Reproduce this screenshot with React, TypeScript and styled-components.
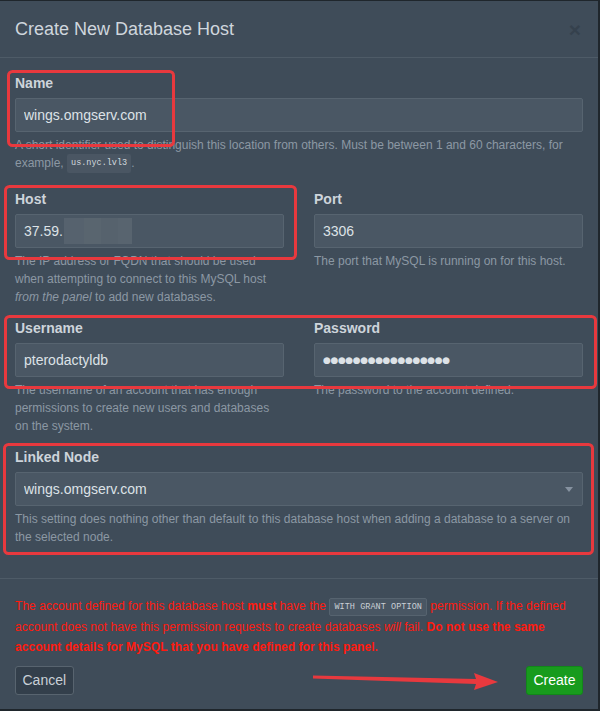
import React from 'react';
import styled, { createGlobalStyle } from 'styled-components';

const GlobalStyle = createGlobalStyle`
    html, body {
        margin: 0;
        padding: 0;
        background: #1f262c;
    }
    body {
        font-family: 'Liberation Sans', Arial, sans-serif;
        -webkit-font-smoothing: antialiased;
    }
`;

const Modal = styled.div`
    position: relative;
    width: 598px;
    height: 708px;
    margin-top: 1px;
    background: #3f4c59;
    color: #cdd4db;
    box-sizing: border-box;
`;

const Header = styled.div`
    display: flex;
    align-items: center;
    justify-content: space-between;
    padding: 15px;
    border-bottom: 1px solid #4e5b67;
`;

const Title = styled.h4`
    margin: 0;
    font-size: 18px;
    font-weight: normal;
    line-height: 26px;
    color: #cfd6dd;
`;

const Close = styled.button`
    border: 0;
    background: none;
    padding: 0;
    margin-right: 2px;
    font-family: 'Liberation Sans', Arial, sans-serif;
    font-size: 21px;
    font-weight: bold;
    line-height: 1;
    color: #35414d;
    cursor: pointer;
`;

const Body = styled.div`
    padding: 15px;
`;

const Row = styled.div`
    display: grid;
    grid-template-columns: 1fr 1fr;
    column-gap: 30px;
`;

const Group = styled.div<{ $mb?: number }>`
    margin-bottom: ${({ $mb = 14 }) => $mb}px;
`;

const Label = styled.label`
    display: block;
    margin-bottom: 5px;
    font-size: 14px;
    font-weight: bold;
    line-height: 20px;
    color: #cdd4db;
`;

const Field = styled.div`
    position: relative;
    display: flex;
    align-items: center;
    height: 34px;
    box-sizing: border-box;
    padding: 0 8px;
    background: #4a5764;
    border: 1px solid #576470;
    border-radius: 2px;
`;

const Input = styled.input<{ $masked?: boolean }>`
    flex: 1;
    min-width: 0;
    padding: 0;
    border: 0;
    outline: none;
    background: transparent;
    font-family: ${({ $masked }) => ($masked ? "'DejaVu Sans', sans-serif" : "'Liberation Sans', Arial, sans-serif")};
    font-size: ${({ $masked }) => ($masked ? '9px' : '14px')};
    letter-spacing: ${({ $masked }) => ($masked ? '-0.4px' : 'normal')};
    color: #dde2e7;
`;

const Redacted = styled.span`
    position: absolute;
    left: 48px;
    top: 3px;
    width: 68px;
    height: 26px;
    background: linear-gradient(90deg, #56626e 0 30%, #59656f 30% 55%, #56626d 55% 80%, #58646f 80%);
`;

const Caret = styled.span`
    position: absolute;
    right: 9px;
    top: 14px;
    width: 0;
    height: 0;
    border-left: 4px solid transparent;
    border-right: 4px solid transparent;
    border-top: 5px solid #8692a0;
`;

const Code = styled.code`
    display: inline-block;
    padding: 3px 4px;
    font-family: 'Liberation Mono', monospace;
    font-size: 8.5px;
    line-height: 13px;
    color: #d3d9df;
    background: #4a5663;
    border-radius: 2px;
    vertical-align: middle;
`;

const Help = styled.p`
    margin: 4px 0 0;
    font-size: 12px;
    line-height: 18px;
    color: #8c98a4;

    em {
        font-style: italic;
    }
`;

const Footer = styled.div`
    padding: 17px 15px 15px;
    border-top: 1px solid #4e5b67;
`;

const Warning = styled.p`
    margin: 0 0 8px;
    font-size: 12px;
    line-height: 20.5px;
    letter-spacing: 0.05px;
    color: #ff1a0f;

    ${Code} {
        border: 1px solid #56636f;
        padding: 2px 4px;
        line-height: 12px;
        color: #c9d0d6;
        background: #495663;
    }
`;

const Actions = styled.div`
    display: flex;
    justify-content: space-between;
    align-items: center;
`;

const Button = styled.button<{ $primary?: boolean }>`
    height: 29px;
    padding: 0 6.5px;
    font-family: 'Liberation Sans', Arial, sans-serif;
    font-size: 14px;
    border-radius: 3px;
    cursor: pointer;
    color: ${({ $primary }) => ($primary ? '#ffffff' : '#c9d0d7')};
    background: ${({ $primary }) => ($primary ? '#189b1d' : '#333f4b')};
    border: 1px solid ${({ $primary }) => ($primary ? '#12861a' : '#58646f')};
`;

const Overlay = styled.svg`
    position: absolute;
    left: 0;
    top: 0;
    pointer-events: none;
`;

const marks = [
    { x: 8.5, y: 70.5, w: 165, h: 74 },
    { x: 5.5, y: 185.5, w: 290, h: 72 },
    { x: 5.5, y: 315.5, w: 590, h: 71 },
    { x: 4.5, y: 443.5, w: 588, h: 109 },
];

export default function App() {
    return (
        <>
            <GlobalStyle />
            <Modal>
                <Header>
                    <Title>Create New Database Host</Title>
                    <Close aria-label='Close'>×</Close>
                </Header>
                <Body>
                    <Group $mb={16}>
                        <Label>Name</Label>
                        <Field>
                            <Input defaultValue='wings.omgserv.com' />
                        </Field>
                        <Help>
                            A short identifier used to distinguish this location from others. Must be between 1 and 60
                            characters, for example, <Code>us.nyc.lvl3</Code>.
                        </Help>
                    </Group>
                    <Row>
                        <Group $mb={12}>
                            <Label>Host</Label>
                            <Field>
                                <Input defaultValue='37.59.' />
                                <Redacted />
                            </Field>
                            <Help>
                                The IP address or FQDN that should be used when attempting to connect to this MySQL host{' '}
                                <em>from the panel</em> to add new databases.
                            </Help>
                        </Group>
                        <Group $mb={12}>
                            <Label>Port</Label>
                            <Field>
                                <Input defaultValue='3306' />
                            </Field>
                            <Help>The port that MySQL is running on for this host.</Help>
                        </Group>
                    </Row>
                    <Row>
                        <Group $mb={12}>
                            <Label>Username</Label>
                            <Field>
                                <Input defaultValue='pterodactyldb' />
                            </Field>
                            <Help>
                                The username of an account that has enough permissions to create new users and databases
                                on the system.
                            </Help>
                        </Group>
                        <Group $mb={12}>
                            <Label>Password</Label>
                            <Field>
                                <Input $masked readOnly defaultValue='●●●●●●●●●●●●●●●●●' />
                            </Field>
                            <Help>The password to the account defined.</Help>
                        </Group>
                    </Row>
                    <Group $mb={17}>
                        <Label>Linked Node</Label>
                        <Field>
                            <Input defaultValue='wings.omgserv.com' readOnly />
                            <Caret />
                        </Field>
                        <Help>
                            This setting does nothing other than default to this database host when adding a database to
                            a server on the selected node.
                        </Help>
                    </Group>
                </Body>
                <Footer>
                    <Warning>
                        The account defined for this database host <strong>must</strong> have the{' '}
                        <Code>WITH GRANT OPTION</Code> permission. If the defined account does not have this permission
                        requests to create databases <em>will</em> fail.{' '}
                        <strong>Do not use the same account details for MySQL that you have defined for this panel.</strong>
                    </Warning>
                    <Actions>
                        <Button>Cancel</Button>
                        <Button $primary>Create</Button>
                    </Actions>
                </Footer>
                <Overlay width='598' height='708'>
                    {marks.map((m, i) => (
                        <rect
                            key={i}
                            x={m.x}
                            y={m.y}
                            width={m.w}
                            height={m.h}
                            rx='4'
                            fill='none'
                            stroke='#e8393e'
                            strokeWidth='3'
                        />
                    ))}
                    <polygon
                        points='313,674.5 476,678 474,672 498,681 474,689 476,683 313,677.5'
                        fill='#e8393e'
                    />
                </Overlay>
            </Modal>
        </>
    );
}
